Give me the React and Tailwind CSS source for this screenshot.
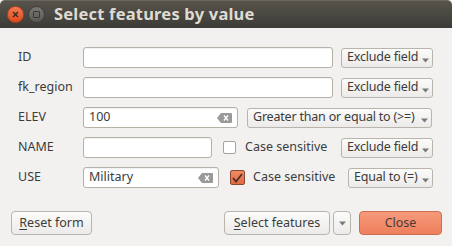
import React from "react";

const FONT = { fontFamily: '"Noto Sans", "DejaVu Sans", sans-serif' };

function Arrow() {
  return (
    <svg width="7" height="5" viewBox="0 0 7 5" className="mt-[5px] shrink-0">
      <path d="M0 0.5 L7 0.5 L3.5 4.5 Z" fill="#7a7a7a" />
    </svg>
  );
}

function Combo({ label, w, ml }) {
  return (
    <div
      className={`flex items-center justify-between h-[20px] pl-[5px] pr-[3px] border border-[#b9b4ac] rounded-[3px] bg-gradient-to-b from-[#fbfbfa] to-[#ecebe9] text-[12.5px] text-[#3c3c3c] tracking-[-0.2px] ${w} ${ml}`}
    >
      <span className="whitespace-nowrap leading-none">{label}</span>
      <Arrow />
    </div>
  );
}

function ClearIcon() {
  return (
    <svg width="15" height="10" viewBox="0 0 15 10" className="shrink-0">
      <path d="M4 0 H14 Q15 0 15 1 V9 Q15 10 14 10 H4 L0 5 Z" fill="#9a9a98" />
      <path d="M7 2.5 L11 7.5 M11 2.5 L7 7.5" stroke="#fff" strokeWidth="1.4" />
    </svg>
  );
}

function Input({ w, value, clear }) {
  return (
    <div
      className={`flex items-center h-[21px] px-[5px] border border-[#b5b0a8] rounded-[3px] bg-white text-[12.5px] text-[#3c3c3c] shadow-[inset_0_1px_1px_rgba(0,0,0,0.06)] ${w}`}
    >
      <span className="flex-1 leading-none">{value}</span>
      {clear && <ClearIcon />}
    </div>
  );
}

function Label({ children }) {
  return <div className="w-[65px] text-[12.5px] text-[#3c3c3c] leading-none">{children}</div>;
}

export default function App() {
  return (
    <div className="w-[452px] h-[246px] bg-[#f2f1f0] flex flex-col overflow-hidden" style={FONT}>
      <div className="h-[28px] shrink-0 flex items-center rounded-t-[5px] bg-gradient-to-b from-[#57544c] to-[#3c3b37] border-t border-[#6a675e]">
        <div className="ml-[7px] w-[17px] h-[17px] rounded-full bg-gradient-to-b from-[#f27a52] to-[#df4a1f] border border-[#b8421e] flex items-center justify-center">
          <svg width="7" height="7" viewBox="0 0 7 7">
            <path d="M1 1 L6 6 M6 1 L1 6" stroke="#3a2a22" strokeWidth="1.4" />
          </svg>
        </div>
        <div className="ml-[4px] w-[17px] h-[17px] rounded-full bg-gradient-to-b from-[#7a7873] to-[#5a5853] border border-[#3f3d39] flex items-center justify-center">
          <div className="w-[7px] h-[7px] border border-[#3a3936] rounded-[1px]" />
        </div>
        <div className="ml-[9px] text-[16.5px] font-bold text-[#dfdbd2] tracking-[0.2px] leading-none">Select features by value</div>
      </div>

      <div className="flex flex-col gap-[9px] pt-[19px] pl-[18px] pr-[19px]">
        <div className="flex items-center">
          <Label>ID</Label>
          <Input w="w-[250px]" />
          <Combo label="Exclude field" w="w-[92px]" ml="ml-[8px]" />
        </div>
        <div className="flex items-center">
          <Label>fk_region</Label>
          <Input w="w-[250px]" />
          <Combo label="Exclude field" w="w-[92px]" ml="ml-[8px]" />
        </div>
        <div className="flex items-center">
          <Label>ELEV</Label>
          <Input w="w-[155px]" value="100" clear />
          <Combo label="Greater than or equal to (>=)" w="w-[185px]" ml="ml-[9px]" />
        </div>
        <div className="flex items-center">
          <Label>NAME</Label>
          <Input w="w-[129px]" />
          <div className="ml-[11px] w-[13px] h-[13px] border border-[#a8a39b] rounded-[2px] bg-white" />
          <div className="ml-[9px] text-[12.5px] text-[#3c3c3c] leading-none">Case sensitive</div>
          <Combo label="Exclude field" w="w-[92px]" ml="ml-auto" />
        </div>
        <div className="flex items-center">
          <Label>USE</Label>
          <Input w="w-[136px]" value="Military" clear />
          <div className="ml-[11px] w-[15px] h-[15px] border border-[#8a4a32] rounded-[2px] bg-gradient-to-b from-[#f08a64] to-[#e06a40] flex items-center justify-center">
            <svg width="11" height="10" viewBox="0 0 11 10">
              <path d="M1 5 L4 8.5 L10 1" stroke="#4a3028" strokeWidth="1.8" fill="none" />
            </svg>
          </div>
          <div className="ml-[8px] text-[12.5px] text-[#3c3c3c] leading-none">Case sensitive</div>
          <Combo label="Equal to (=)" w="w-[85px]" ml="ml-auto" />
        </div>
      </div>

      <div className="flex items-center mt-[23px] pl-[11px] pr-[10px]">
        <div className="h-[24px] w-[81px] flex items-center justify-center border border-[#b9b4ac] rounded-[4px] bg-gradient-to-b from-[#fbfbfa] to-[#ecebe9] text-[12.5px] text-[#3c3c3c] leading-none">
          <span><span className="underline underline-offset-2">R</span>eset form</span>
        </div>
        <div className="ml-auto h-[24px] w-[106px] flex items-center justify-center border border-[#b9b4ac] rounded-[4px] bg-gradient-to-b from-[#fbfbfa] to-[#ecebe9] text-[12.5px] text-[#3c3c3c] leading-none">
          <span><span className="underline underline-offset-2">S</span>elect features</span>
        </div>
        <div className="ml-[3px] h-[24px] w-[18px] flex items-center justify-center border border-[#b9b4ac] rounded-[4px] bg-gradient-to-b from-[#fbfbfa] to-[#ecebe9]">
          <svg width="7" height="5" viewBox="0 0 7 5">
            <path d="M0 0.5 L7 0.5 L3.5 4.5 Z" fill="#7a7a7a" />
          </svg>
        </div>
        <div className="ml-[8px] h-[24px] w-[83px] flex items-center justify-center border border-[#c8704f] rounded-[4px] bg-gradient-to-b from-[#f69a7b] to-[#ee7f5c] text-[12.5px] text-[#4a3a35] leading-none">
          Close
        </div>
      </div>
    </div>
  );
}
